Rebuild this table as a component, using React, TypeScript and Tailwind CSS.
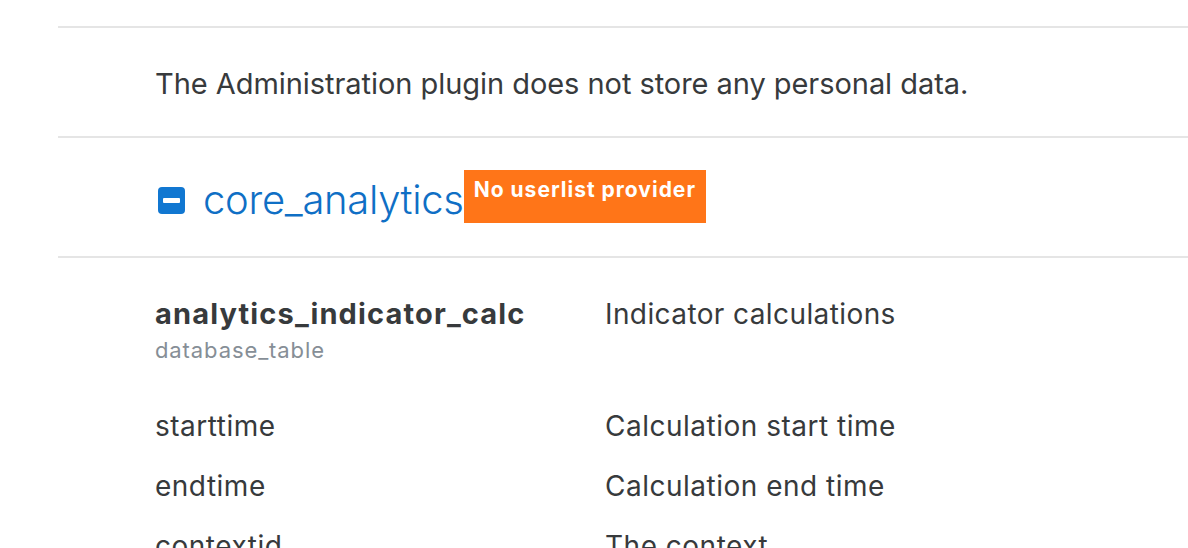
import React from "react";

const fields: [string, string][] = [
  ["starttime", "Calculation start time"],
  ["endtime", "Calculation end time"],
  ["contextid", "The context"],
];

function CollapseIcon() {
  return (
    <span className="inline-flex h-[27px] w-[27px] items-center justify-center rounded-[4px] bg-[#1177d1]">
      <span className="h-[5px] w-[17px] rounded-[1px] bg-white" />
    </span>
  );
}

export default function App() {
  return (
    <div
      className="h-[548px] overflow-hidden bg-white pt-[26px] text-[#373a3c]"
      style={{ fontFamily: "Inter, 'Noto Sans', sans-serif" }}
    >
      <div className="ml-[58px]">
        <div className="border-t-2 border-[#e5e5e5] pb-[30px] pl-[97px] pt-[33px]">
          <p className="text-[29px] leading-[45px] tracking-[-0.05px]">
            The Administration plugin does not store any personal data.
          </p>
        </div>

        <div className="flex h-[120px] items-start border-t-2 border-[#e5e5e5] pl-[100px] pt-[32px]">
          <a href="#" className="flex items-center gap-[18px] pt-[12px] text-[#0f6fc5]">
            <CollapseIcon />
            <span className="text-[40px] font-light leading-[36px] tracking-[-0.3px]">core_analytics</span>
          </a>
          <span className="flex h-[53px] items-start bg-[#ff7518] pl-[10px] pr-[10px] pt-[8px] text-[21px] font-bold leading-[24px] tracking-[1px] text-white">
            No userlist provider
          </span>
        </div>

        <div className="border-t-2 border-[#e5e5e5] pl-[97px] pt-[38px]">
          <div className="grid grid-cols-[450px_1fr]">
            <div>
              <div className="text-[29px] font-bold leading-[36px] tracking-[1.15px]">analytics_indicator_calc</div>
              <div className="text-[22px] leading-[36px] tracking-[0.9px] text-[#868e96]">database_table</div>
            </div>
            <div className="text-[28px] leading-[36px] tracking-[0.4px]">Indicator calculations</div>
          </div>
          <div className="mt-[40px] flex flex-col gap-[24px]">
            {fields.map(([name, desc]) => (
              <div key={name} className="grid grid-cols-[450px_1fr] text-[28px] leading-[36px] tracking-[0.5px]">
                <span>{name}</span>
                <span>{desc}</span>
              </div>
            ))}
          </div>
        </div>
      </div>
    </div>
  );
}
